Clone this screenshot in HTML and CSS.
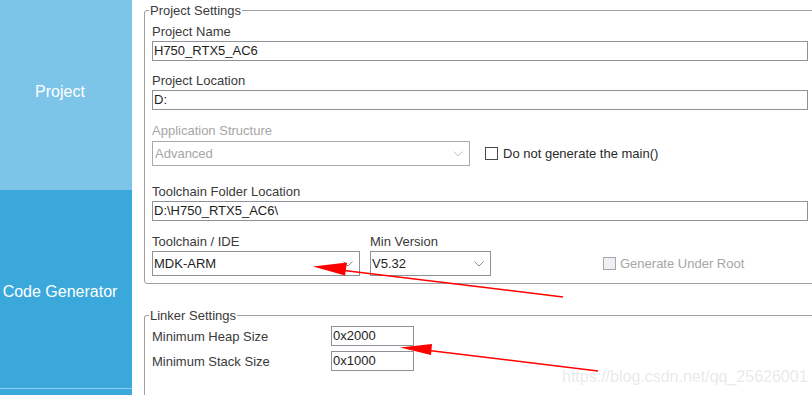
FILE: index.html
```html
<!DOCTYPE html>
<html lang="en">
<head>
<meta charset="utf-8">
<title>Project Manager</title>
<link rel="stylesheet" href="styles.css">
</head>
<body>
<div class="app">
  <nav class="sidebar">
    <div class="tab tab-project">Project</div>
    <div class="tab tab-code">Code Generator</div>
    <div class="tab tab-next"></div>
  </nav>
  <main class="content">
    <fieldset class="group settings">
      <legend>Project Settings</legend>
      <div class="field f-name">
        <div class="label">Project Name</div>
        <div class="input wide">H750_RTX5_AC6</div>
      </div>
      <div class="field f-loc">
        <div class="label">Project Location</div>
        <div class="input wide">D:</div>
      </div>
      <div class="field f-app">
        <div class="label disabled">Application Structure</div>
        <div class="row">
          <div class="select sel-app disabled">
            <span>Advanced</span>
            <svg class="chev" width="10" height="6" viewBox="0 0 10 6"><path d="M0.5 0.5 L5 5 L9.5 0.5" fill="none" stroke="#c4c4c4" stroke-width="1"/></svg>
          </div>
          <label class="check">
            <span class="box"></span>
            <span>Do not generate the main()</span>
          </label>
        </div>
      </div>
      <div class="field f-tc">
        <div class="label">Toolchain Folder Location</div>
        <div class="input wide">D:\H750_RTX5_AC6\</div>
      </div>
      <div class="field f-ide row-cols">
        <div class="col col-ide">
          <div class="label">Toolchain / IDE</div>
          <div class="select sel-ide">
            <span>MDK-ARM</span>
            <svg class="chev" width="10" height="6" viewBox="0 0 10 6"><path d="M0.5 0.5 L5 5 L9.5 0.5" fill="none" stroke="#8a8a8a" stroke-width="1"/></svg>
          </div>
        </div>
        <div class="col col-ver">
          <div class="label">Min Version</div>
          <div class="select sel-ver">
            <span>V5.32</span>
            <svg class="chev" width="10" height="6" viewBox="0 0 10 6"><path d="M0.5 0.5 L5 5 L9.5 0.5" fill="none" stroke="#8a8a8a" stroke-width="1"/></svg>
          </div>
        </div>
        <div class="col col-root">
          <label class="check disabled">
            <span class="box"></span>
            <span>Generate Under Root</span>
          </label>
        </div>
      </div>
    </fieldset>

    <fieldset class="group linker">
      <legend>Linker Settings</legend>
      <div class="lrow first">
        <div class="llabel">Minimum Heap Size</div>
        <div class="input small">0x2000</div>
      </div>
      <div class="lrow">
        <div class="llabel">Minimum Stack Size</div>
        <div class="input small">0x1000</div>
      </div>
    </fieldset>
  </main>

  <svg class="annot" width="812" height="395" viewBox="0 0 812 395">
    <line x1="563" y1="297" x2="340" y2="270" stroke="#ff0000" stroke-width="1.5"/>
    <polygon points="313,266.5 347,262.5 345,275.5" fill="#ff0000"/>
    <line x1="598" y1="371" x2="425" y2="350" stroke="#ff0000" stroke-width="1.5"/>
    <polygon points="400,347.5 432,344 431,355" fill="#ff0000"/>
  </svg>
  <div class="watermark">https://blog.csdn.net/qq_25626001</div>
</div>
</body>
</html>
```

FILE: styles.css
```css
* { box-sizing: border-box; }
html, body { margin: 0; padding: 0; }
body {
  width: 812px;
  height: 395px;
  overflow: hidden;
  background: #ffffff;
  font-family: "Liberation Sans", Arial, sans-serif;
  font-size: 13px;
  color: #3a3a3a;
}
.app {
  position: relative;
  display: flex;
  height: 395px;
  overflow: hidden;
}

/* sidebar */
.sidebar {
  width: 132px;
  flex: none;
  display: flex;
  flex-direction: column;
  background: #3aa8da;
}
.tab {
  color: #ffffff;
  font-size: 16px;
  line-height: 18px;
  text-align: center;
  padding-right: 12px;
  white-space: nowrap;
}
.tab-project {
  height: 190px;
  padding-top: 83px;
  background: #7cc5e8;
}
.tab-code {
  height: 199px;
  padding-top: 93px;
  background: #3aa8da;
  border-bottom: 1px solid #8ccfee;
}
.tab-next {
  flex: 1;
  background: #3aa8da;
}

/* content */
.content {
  margin-left: 12px;
  width: 669px;
  flex: none;
}
fieldset.group {
  margin: 0;
  min-width: 0;
  width: 669px;
  border: 1px solid #a0a0a0;
  border-radius: 3px 0 0 3px;
  padding: 0 0 7px 7px;
}
fieldset.settings { margin-top: 3px; }
fieldset.linker {
  margin-top: 24px;
  padding-bottom: 24px;
  border-bottom: none;
  border-radius: 3px 0 0 0;
}
legend {
  padding: 0 1px;
  margin-left: -3px;
  line-height: 15px;
  color: #3a3a3a;
}
.label {
  line-height: 15px;
  white-space: nowrap;
}
.label.disabled { color: #a6a6a6; }

.input {
  height: 20px;
  border: 1px solid #8e9296;
  padding: 0 1px;
  line-height: 18px;
  color: #1e1e1e;
  white-space: nowrap;
  background: #fff;
}
.input.wide { width: 656px; margin-top: 2px; }

.f-name { margin-top: 6px; }
.f-loc { margin-top: 12px; }
.f-app { margin-top: 13px; }
.f-tc { margin-top: 18px; }
.f-ide { margin-top: 13px; }

.row {
  display: flex;
  align-items: center;
  margin-top: 3px;
}
.select {
  height: 25px;
  border: 1px solid #8e9296;
  display: flex;
  align-items: center;
  justify-content: space-between;
  padding: 0 6px 0 1px;
  color: #1e1e1e;
  background: #fff;
}
.select.disabled { color: #a6a6a6; border-color: #a8abae; padding-left: 2px; }
.select .chev { display: block; }
.sel-app { width: 318px; }
.sel-ide { width: 208px; margin-top: 2px; }
.sel-ver { width: 121px; margin-top: 2px; }

.check {
  display: flex;
  align-items: center;
  gap: 5px;
  color: #2a2a2a;
  white-space: nowrap;
}
.row .check { margin-left: 15px; }
.check .box {
  width: 13px;
  height: 13px;
  border: 1px solid #4a4a4a;
  background: #fff;
}
.check.disabled { color: #a6a6a6; gap: 4px; }
.check.disabled .box {
  border-color: #a5a9ad;
  background: #eef0f3;
}

.row-cols {
  display: flex;
  align-items: flex-end;
}
.col-ver { margin-left: 10px; }
.col-root {
  margin-left: 112px;
  height: 25px;
  display: flex;
  align-items: center;
}

/* linker */
.lrow {
  display: flex;
  align-items: center;
  margin-top: 5px;
}
.lrow.first { margin-top: 3px; }
.llabel {
  width: 179px;
  line-height: 15px;
  white-space: nowrap;
}
.input.small { width: 83px; }

/* annotations drawn over the screenshot */
.annot {
  position: absolute;
  left: 0;
  top: 0;
  pointer-events: none;
}
.watermark {
  position: absolute;
  left: 562px;
  top: 368px;
  font-size: 16px;
  line-height: 18px;
  color: rgba(200, 200, 200, 0.4);
  white-space: nowrap;
  pointer-events: none;
}
```
